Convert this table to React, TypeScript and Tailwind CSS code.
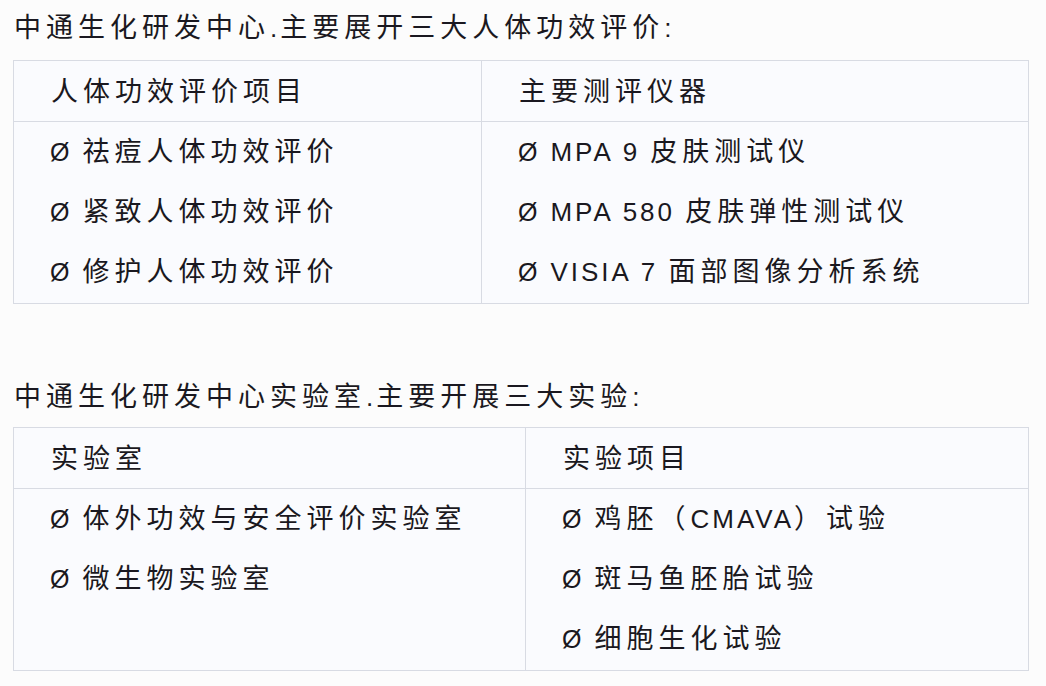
const CJK = /([\u2E80-\u9FFF\uFF00-\uFFEF\u3000-\u303F]+)/;

// CJK runs are set wider than the latin runs, as in the picture
const Txt = ({ s }: { s: string }) => (
  <span className="whitespace-pre">
    {s
      .split(CJK)
      .filter(Boolean)
      .map((part, i) =>
        CJK.test(part) ? (
          <span key={i} className="text-[27px] tracking-[5px]">
            {part}
          </span>
        ) : (
          <span key={i} className="text-[26px] tracking-[3px]">
            {part}
          </span>
        )
      )}
  </span>
);

const Line = ({ s }: { s: string }) => (
  <div className="h-[60px] flex items-center">
    <span className="whitespace-pre">
      <span className="text-[25px] mr-[13px]">Ø</span>
      <Txt s={s} />
    </span>
  </div>
);

type TableProps = {
  cols: string;
  heads: [string, string];
  left: string[];
  right: string[];
};

const Table = ({ cols, heads, left, right }: TableProps) => (
  <div className="ml-[13px] w-[1016px] border border-[#d8dbe3] bg-[#fafbfe]">
    <div className={`grid ${cols}`}>
      <div className="h-[61px] pl-[37px] pt-[2px] flex items-center border-b border-[#d8dbe3]">
        <Txt s={heads[0]} />
      </div>
      <div className="h-[61px] pl-[37px] pt-[2px] flex items-center border-b border-l border-[#d8dbe3]">
        <Txt s={heads[1]} />
      </div>
      <div className="pl-[36px] pb-[1px]">
        {left.map((s, i) => (
          <Line key={i} s={s} />
        ))}
      </div>
      <div className="pl-[36px] pb-[1px] border-l border-[#d8dbe3]">
        {right.map((s, i) => (
          <Line key={i} s={s} />
        ))}
      </div>
    </div>
  </div>
);

export default function App() {
  return (
    <div
      className="w-[1046px] h-[686px] overflow-hidden bg-[#fcfcfc] text-[#1a1820]"
      style={{ fontFamily: '"Liberation Sans", "Noto Sans CJK SC", sans-serif' }}
    >
      <div className="h-[56px] pl-[14px] flex items-center mb-[4px]">
        <Txt s="中通生化研发中心.主要展开三大人体功效评价:" />
      </div>
      <Table
        cols="grid-cols-[467px_1fr]"
        heads={['人体功效评价项目', '主要测评仪器']}
        left={['祛痘人体功效评价', '紧致人体功效评价', '修护人体功效评价']}
        right={['MPA 9 皮肤测试仪', 'MPA 580 皮肤弹性测试仪', 'VISIA 7 面部图像分析系统']}
      />
      <div className="mt-[65px] h-[56px] pl-[14px] flex items-center mb-[2px]">
        <Txt s="中通生化研发中心实验室.主要开展三大实验:" />
      </div>
      <Table
        cols="grid-cols-[511px_1fr]"
        heads={['实验室', '实验项目']}
        left={['体外功效与安全评价实验室', '微生物实验室']}
        right={['鸡胚（CMAVA）试验', '斑马鱼胚胎试验', '细胞生化试验']}
      />
    </div>
  );
}
